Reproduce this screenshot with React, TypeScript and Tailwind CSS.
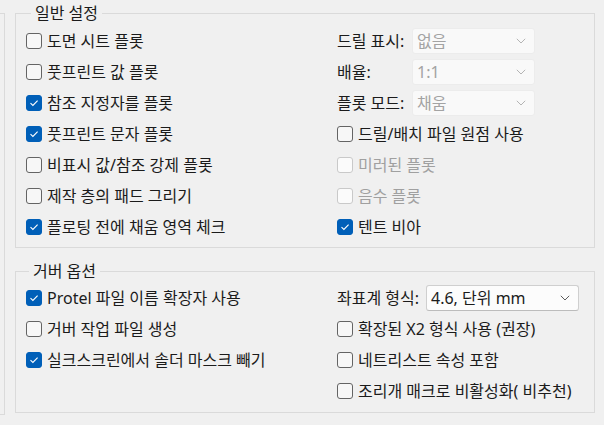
import React from 'react'

type CheckProps = {
  label: string
  checked?: boolean
  disabled?: boolean
}

const CheckBox: React.FC<CheckProps> = ({ label, checked, disabled }) => {
  const box = checked
    ? 'bg-[#005fb8] border-[#005fb8]'
    : disabled
      ? 'bg-[#fbfbfb] border-[#c9c9c9]'
      : 'bg-[#f7f7f7] border-[#646464]'

  return (
    <div className="flex items-center h-[31px]">
      <span className={`flex justify-center items-center w-4 h-4 rounded-[3px] border ${box}`}>
        {checked && (
          <svg width="10" height="8" viewBox="0 0 10 8" fill="none">
            <path d="M1.5 4.2 L3.9 6.4 L8.6 1.6" stroke="#ffffff" strokeWidth="1.1" />
          </svg>
        )}
      </span>
      <span className={`ml-[5px] whitespace-nowrap ${disabled ? 'text-[#a0a0a0]' : 'text-[#1b1b1b]'}`}>{label}</span>
    </div>
  )
}

type SelectProps = {
  label: string
  value: string
  labelWidth: string
  boxWidth: string
  disabled?: boolean
}

const Chevron: React.FC<{ color: string }> = ({ color }) => (
  <svg width="10" height="6" viewBox="0 0 10 6" fill="none">
    <path d="M0.8 0.8 L5 5 L9.2 0.8" stroke={color} strokeWidth="1" />
  </svg>
)

const SelectRow: React.FC<SelectProps> = ({ label, value, labelWidth, boxWidth, disabled }) => (
  <div className="flex items-center h-[31px]">
    <span className={`${labelWidth} whitespace-nowrap text-[#1b1b1b]`}>{label}</span>
    <div
      className={`flex justify-between items-center h-[26px] pl-[4px] pr-[8px] rounded-[3px] border ${boxWidth} ${
        disabled ? 'bg-[#f9f9f9] border-[#ececec] text-[#a3a3a3]' : 'bg-[#fcfcfc] border-[#cfcfcf] border-b-[#bcbcbc] text-[#1b1b1b]'
      }`}
    >
      <span>{value}</span>
      <Chevron color={disabled ? '#b4b4b4' : '#5c5c5c'} />
    </div>
  </div>
)

const App: React.FC = () => {
  return (
    <div className="flex w-[604px] h-[425px] bg-[#f0f0f0] text-[16px] leading-[20px] font-['Noto_Sans','Noto_Sans_CJK_KR',sans-serif] overflow-hidden">
      <div className="w-[5px] h-[402px] mt-[13px] border-t border-r border-b border-[#dadada]" />
      <div className="flex flex-col ml-[10px] mt-[3px] w-[580px]">
        <fieldset className="border border-[#dadada] pl-[10px] pt-[2px] pb-[5px]">
          <legend className="ml-[5px] px-[4px] text-[#1b1b1b]">일반 설정</legend>
          <div className="grid grid-cols-[311px_1fr]">
            <CheckBox label="도면 시트 플롯" />
            <SelectRow label="드릴 표시:" value="없음" labelWidth="w-[75px]" boxWidth="w-[123px]" disabled />
            <CheckBox label="풋프린트 값 플롯" />
            <SelectRow label="배율:" value="1:1" labelWidth="w-[75px]" boxWidth="w-[123px]" disabled />
            <CheckBox label="참조 지정자를 플롯" checked />
            <SelectRow label="플롯 모드:" value="채움" labelWidth="w-[75px]" boxWidth="w-[123px]" disabled />
            <CheckBox label="풋프린트 문자 플롯" checked />
            <CheckBox label="드릴/배치 파일 원점 사용" />
            <CheckBox label="비표시 값/참조 강제 플롯" />
            <CheckBox label="미러된 플롯" disabled />
            <CheckBox label="제작 층의 패드 그리기" />
            <CheckBox label="음수 플롯" disabled />
            <CheckBox label="플로팅 전에 채움 영역 체크" checked />
            <CheckBox label="텐트 비아" checked />
          </div>
        </fieldset>
        <fieldset className="mt-[13px] border border-[#dadada] pl-[10px] pt-px pb-[6px]">
          <legend className="ml-[3px] px-[4px] text-[#1b1b1b]">거버 옵션</legend>
          <div className="grid grid-cols-[311px_1fr]">
            <CheckBox label="Protel 파일 이름 확장자 사용" checked />
            <SelectRow label="좌표계 형식:" value="4.6, 단위 mm" labelWidth="w-[89px]" boxWidth="w-[153px]" />
            <CheckBox label="거버 작업 파일 생성" />
            <CheckBox label="확장된 X2 형식 사용 (권장)" />
            <CheckBox label="실크스크린에서 솔더 마스크 빼기" checked />
            <CheckBox label="네트리스트 속성 포함" />
            <div />
            <CheckBox label="조리개 매크로 비활성화( 비추천)" />
          </div>
        </fieldset>
      </div>
    </div>
  )
}

export default App
